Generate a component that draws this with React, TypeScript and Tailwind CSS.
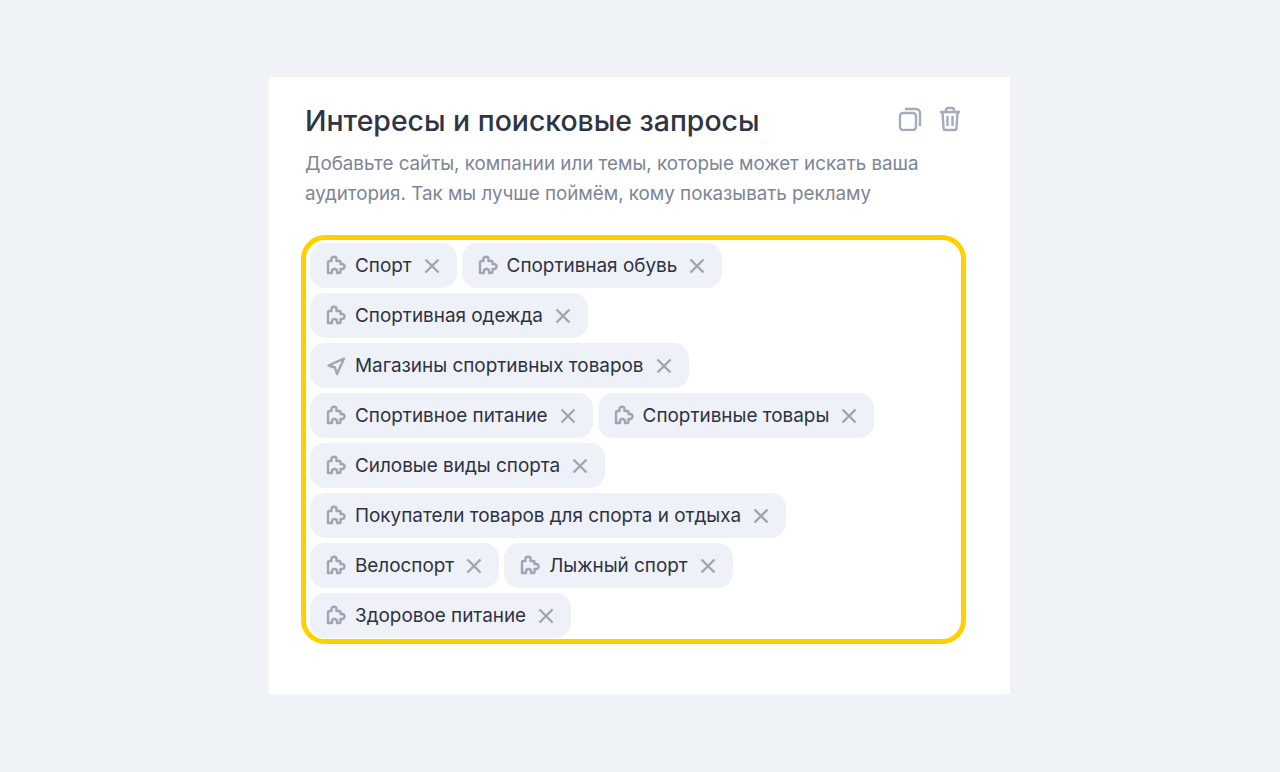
const chips = [
  [{ label: 'Спорт' }, { label: 'Спортивная обувь' }],
  [{ label: 'Спортивная одежда' }],
  [{ label: 'Магазины спортивных товаров', icon: 'nav' }],
  [{ label: 'Спортивное питание' }, { label: 'Спортивные товары' }],
  [{ label: 'Силовые виды спорта' }],
  [{ label: 'Покупатели товаров для спорта и отдыха' }],
  [{ label: 'Велоспорт' }, { label: 'Лыжный спорт' }],
  [{ label: 'Здоровое питание' }],
];

function PuzzleIcon() {
  return (
    <svg className="-mt-[2px]" width="20" height="20" viewBox="0 0 20 20" fill="none" stroke="#9ea5b6" strokeWidth="2.4" strokeLinejoin="round">
      <path d="M2 18V7.5Q2 6 3.5 6H5.5V4Q5.5 1.8 8 1.8T10.5 4V6H13.5Q14.5 6 14.5 7V9H16Q18.5 9 18.5 11.5T16 14H14.5V17Q14.5 18 13.5 18H11V16.5Q11 14 8.5 14T6 16.5V18Z" />
    </svg>
  );
}

function NavIcon() {
  return (
    <svg width="20" height="20" viewBox="0 0 20 20" fill="none" stroke="#9ea5b6" strokeWidth="2.4" strokeLinejoin="round">
      <path d="M18 2.5 2.5 9.5l6.5 2 2 6.5z" />
    </svg>
  );
}

function Chip({ label, icon }: { label: string; icon?: string }) {
  return (
    <div className="flex h-[45px] items-center rounded-[15px] bg-[#eef1f7] pl-[16px] pr-[17px]">
      {icon === 'nav' ? <NavIcon /> : <PuzzleIcon />}
      <span className="ml-[9px] mt-[1px] text-[18.9px] text-[#2d3142]">{label}</span>
      <svg className="ml-[12px]" width="16" height="16" viewBox="0 0 16 16" fill="none" stroke="#9ea5b6" strokeWidth="2.4">
        <path d="M1.5 1.5l13 13M14.5 1.5l-13 13" />
      </svg>
    </div>
  );
}

export default function App() {
  return (
    <div className="h-[772px] bg-[#eff2f7] pl-[269px] pt-[77px] font-['Inter',sans-serif]">
      <div className="h-[617px] w-[741px] bg-white pl-[32px] pr-[44px] pt-[24px]">
        <div className="flex items-start justify-between pl-[4px]">
          <h1 className="text-[28.4px] font-medium leading-[40px] text-[#2f3542]">Интересы и поисковые запросы</h1>
          <div className="mr-[5px] mt-[5px] flex items-center gap-[17px]">
            <svg width="24" height="24" viewBox="0 0 24 24" fill="none" stroke="#a4abbb" strokeWidth="2.4">
              <rect x="2" y="6" width="16" height="17" rx="3" />
              <path d="M7 2h11a4 4 0 0 1 4 4v13" />
            </svg>
            <svg width="22" height="26" viewBox="0 0 22 26" fill="none" stroke="#a4abbb" strokeWidth="2.4" strokeLinejoin="round">
              <path d="M1 6h20M7 6V4a2 2 0 0 1 2-2h4a2 2 0 0 1 2 2v2M3.5 6l1 16a2 2 0 0 0 2 2h9a2 2 0 0 0 2-2l1-16M8.5 10v10M13.5 10v10" />
            </svg>
          </div>
        </div>
        <p className="mt-[8px] pl-[4px] text-[18.77px] leading-[30px] text-[#7d8596]">
          Добавьте сайты, компании или темы, которые может искать ваша
          <br />
          аудитория. Так мы лучше поймём, кому показывать рекламу
        </p>
        <div className="mt-[26px] flex h-[409px] w-[665px] flex-col gap-[5px] rounded-[24px] border-[5px] border-[#ffd000] pl-[4px] pt-[3px]">
          {chips.map((row, i) => (
            <div key={i} className="flex gap-[5px]">
              {row.map((c) => (
                <Chip key={c.label} {...c} />
              ))}
            </div>
          ))}
        </div>
      </div>
    </div>
  );
}
